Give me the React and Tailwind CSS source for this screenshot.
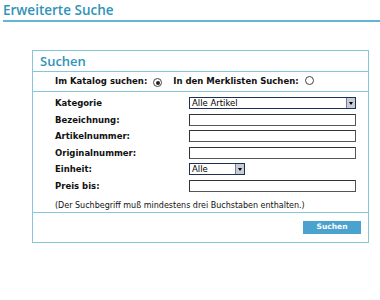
import React from "react";

const Radio = ({ checked }) => (
  <span className="inline-flex items-center justify-center w-[9px] h-[9px] rounded-full border border-[#444] bg-white">
    {checked && <span className="w-[4px] h-[4px] rounded-full bg-[#222]" />}
  </span>
);

const Field = () => (
  <div className="w-[167px] h-[12px] border border-[#555] border-t-[#333] border-l-[#333] bg-white" />
);

const FakeSelect = ({ value, width }) => (
  <div
    className={`${width} h-[12px] border border-[#1f2f4f] bg-white flex items-center justify-between`}
  >
    <span className="pl-[2px] text-[8.5px] leading-none text-black">{value}</span>
    <span className="w-[9px] h-[10px] bg-[#c8ccd4] border-l border-[#6a7fa8] flex items-center justify-center">
      <span className="w-0 h-0 border-l-[2.5px] border-r-[2.5px] border-t-[3px] border-l-transparent border-r-transparent border-t-black" />
    </span>
  </div>
);

const rows = [
  { label: "Kategorie", type: "select", value: "Alle Artikel", width: "w-[167px]" },
  { label: "Bezeichnung:", type: "input" },
  { label: "Artikelnummer:", type: "input" },
  { label: "Originalnummer:", type: "input" },
  { label: "Einheit:", type: "select", value: "Alle", width: "w-[56px]" },
  { label: "Preis bis:", type: "input" },
];

export default function App() {
  return (
    <div
      className="w-[380px] h-[300px] bg-white overflow-hidden"
      style={{ fontFamily: "'DejaVu Sans', Verdana, sans-serif" }}
    >
      <div className="ml-[3px] pt-[1px] border-b-2 border-[#62b6d2] h-[22px]">
        <h1
          className="text-[13.5px] leading-[18px] font-semibold text-[#2f93b8]"
          style={{ fontFamily: "'Open Sans', sans-serif" }}
        >
          Erweiterte Suche
        </h1>
      </div>

      <div className="ml-[32px] mt-[28px] w-[337px] h-[193px] border border-[#86c6dc] flex flex-col">
        <div className="h-[21px] border-b border-[#86c6dc] flex items-center pl-[7px]">
          <span
            className="text-[13px] font-semibold text-[#2f93b8] leading-none"
            style={{ fontFamily: "'Open Sans', sans-serif" }}
          >
            Suchen
          </span>
        </div>

        <div className="h-[20px] border-b border-[#86c6dc] flex items-center pl-[22px] text-[8.5px] font-bold text-[#111]">
          <span>Im Katalog suchen:</span>
          <span className="ml-[6px] mt-[1px]">
            <Radio checked />
          </span>
          <span className="ml-[11px]">In den Merklisten Suchen:</span>
          <span className="ml-[6px] mt-[1px]">
            <Radio />
          </span>
        </div>

        <div className="pt-[5px] pl-[22px] flex flex-col gap-[4.6px]">
          {rows.map((r) => (
            <div key={r.label} className="flex items-center h-[12px]">
              <span className="w-[134px] text-[8.5px] leading-[12px] font-bold text-[#111]">{r.label}</span>
              {r.type === "select" ? (
                <FakeSelect value={r.value} width={r.width} />
              ) : (
                <Field />
              )}
            </div>
          ))}
          <p className="mt-[3px] text-[8px] leading-[12px] text-[#111]">
            (Der Suchbegriff muß mindestens drei Buchstaben enthalten.)
          </p>
        </div>

        <div className="border-t border-[#86c6dc] flex-1 flex items-start justify-end pr-[7px] pt-[8px]">
          <button className="w-[58px] h-[13px] bg-[#4aa3cf] text-white text-[7.5px] font-bold leading-none">
            Suchen
          </button>
        </div>
      </div>
    </div>
  );
}
